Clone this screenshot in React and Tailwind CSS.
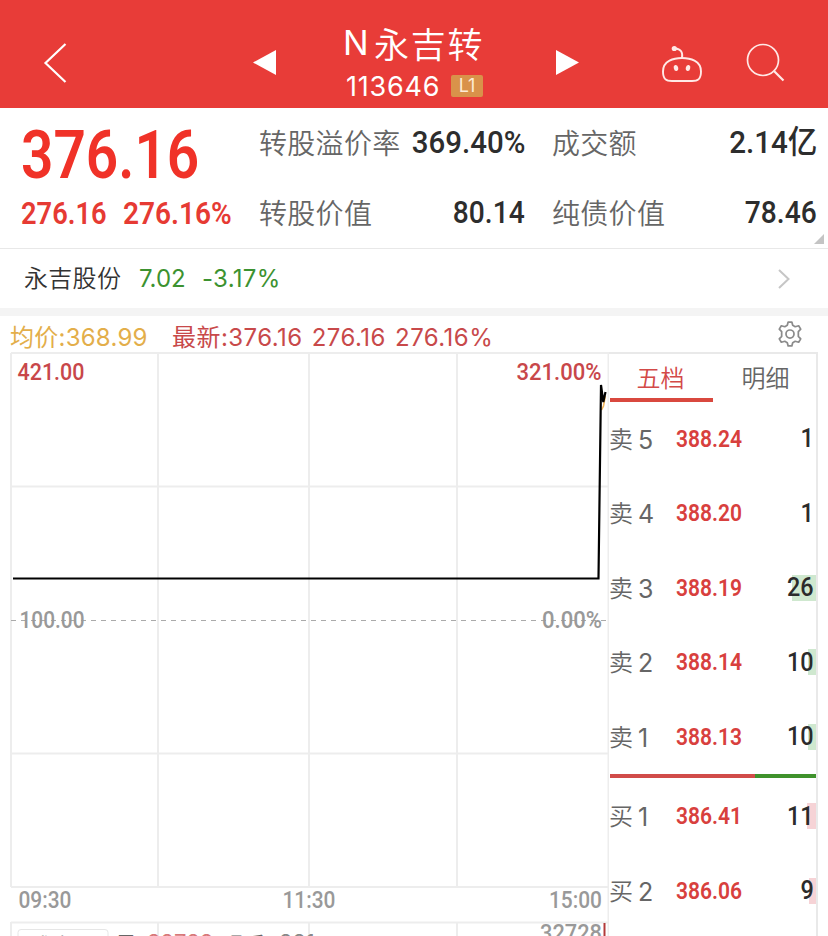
const CJK = "font-['Inter','Noto_Sans_CJK_SC',sans-serif]";

// Condensed figures: the inner span is squeezed horizontally from one side.
function Num({ children, className = "", right = false }) {
  return (
    <span
      className={`inline-block whitespace-nowrap font-['Roboto','Noto_Sans_CJK_SC',sans-serif] leading-none ${
        right ? "origin-right" : "origin-left"
      } ${className}`}
    >
      {children}
    </span>
  );
}

function Header() {
  return (
    <header className="flex h-[108px] items-start bg-[#e83c38] text-white">
      <svg className="mt-[43px] ml-[43px] h-10 w-6 shrink-0" viewBox="0 0 24 40" fill="none" stroke="#fff" strokeWidth="2.2">
        <path d="M22.5 1 2.5 20l20 19" />
      </svg>
      <svg className="mt-[50px] ml-[186px] h-[25px] w-[23px] shrink-0" viewBox="0 0 23 25" fill="#fff">
        <path d="M23 0v25L0 12.5z" />
      </svg>
      <div className="ml-[57px] flex w-[168px] flex-col items-start pl-[10px]">
        <div className="mt-[21px] flex h-[42px] items-center text-[34px] leading-none whitespace-nowrap">
          <span className="mt-px w-[31px]">N</span>
          <span className="font-['Noto_Sans_CJK_SC',sans-serif] text-[35px] font-[350] tracking-[1.7px]">永吉转</span>
        </div>
        <div className="mt-[9px] flex h-7 items-center pl-[3px]">
          <span className="w-[105px] text-[27px] leading-none tracking-[0.8px]">113646</span>
          <span className="flex h-[22px] w-8 items-center justify-center rounded-[2px] bg-[#d9924a] text-[18px] leading-none text-[#fdebd5]">L1</span>
        </div>
      </div>
      <svg className="mt-[50px] ml-[55px] h-[25px] w-[23px] shrink-0" viewBox="0 0 23 25" fill="#fff">
        <path d="M0 0v25l23-12.5z" />
      </svg>
      <svg className="mt-[44px] ml-[82px] h-10 w-[42px] shrink-0" viewBox="0 0 42 40" fill="none" stroke="#ffe9e6" strokeWidth="1.9">
        <path d="M21 14C13 14 2 16.500 2 27.500c0 7.500 3 9.500 9 9.500h20c6 0 9-2 9-9.500C40 16.500 29 14 21 14Z" />
        <path d="M21 14c1-6-1-9-7-9.500" />
        <circle cx="13.300" cy="4.500" r="2.600" fill="#ffe9e6" stroke="none" />
        <ellipse cx="15" cy="24" rx="2.200" ry="3" fill="#ffe9e6" stroke="none" transform="rotate(-12 15 24)" />
        <ellipse cx="27" cy="24" rx="2.200" ry="3" fill="#ffe9e6" stroke="none" transform="rotate(12 27 24)" />
      </svg>
      <svg className="mt-[43px] ml-[43px] h-10 w-10 shrink-0" viewBox="0 0 40 40" fill="none" stroke="#ffe9e6" strokeWidth="1.7">
        <circle cx="17" cy="17" r="15.500" />
        <path d="m28 28 9.500 9.500" strokeWidth="2.200" />
      </svg>
    </header>
  );
}

function Stat({ label, value, scale = "scale-x-[0.88]" }) {
  return (
    <div className="flex h-[70px] items-center justify-between">
      <span className="mt-[2px] text-[28px] leading-none font-[350] tracking-[0.3px] whitespace-nowrap text-[#666]">{label}</span>
      <Num right className={`-mt-[2px] -ml-10 text-[32px] font-medium text-[#2d2d2d] ${scale}`}>{value}</Num>
    </div>
  );
}

function Summary() {
  return (
    <section className="relative flex h-[141px] border-b border-[#e8e8e8]">
      <div className="w-[259px] shrink-0 pl-[21px] text-[#e63a33]">
        <div className="flex h-[81px] items-end">
          <Num className="scale-x-[0.86] text-[66px] font-semibold text-[#f03228]">376.16</Num>
        </div>
        <div className="mt-[9px] flex">
          <span className="w-[102px]"><Num className="scale-x-[0.88] text-[31px] font-semibold">276.16</Num></span>
          <Num className="scale-x-[0.905] text-[31px] font-semibold">276.16%</Num>
        </div>
      </div>
      <div className="w-[266px] shrink-0">
        <Stat label="转股溢价率" value="369.40%" scale="scale-x-[0.92]" />
        <Stat label="转股价值" value="80.14" />
      </div>
      <div className="ml-[27px] w-[265px] shrink-0">
        <Stat label="成交额" value="2.14亿" scale="scale-x-[0.925]" />
        <Stat label="纯债价值" value="78.46" />
      </div>
      <svg className="absolute right-[4px] bottom-[4px] h-[10px] w-[10px]" viewBox="0 0 10 10" fill="#c4c4c4">
        <path d="M10 0v10H0z" />
      </svg>
    </section>
  );
}

function StockRow() {
  return (
    <section className="flex h-[59px] items-center pl-6 text-[24px] leading-none whitespace-nowrap">
      <span className="w-[115px] font-[350] tracking-[0.3px] text-[#333]">永吉股份</span>
      <span className="w-[63px] text-[#3c9230]">7.02</span>
      <span className="tracking-[0.3px] text-[#3c9230]">-3.17%</span>
      <svg className="mr-[37px] ml-auto h-5 w-[14px]" viewBox="0 0 14 20" fill="none" stroke="#c6c6c6" strokeWidth="2">
        <path d="m2 1 9.500 9L2 19" />
      </svg>
    </section>
  );
}

function InfoRow() {
  return (
    <section className="flex h-9 items-center pl-[10px] text-[24px] leading-none font-[380] whitespace-nowrap">
      <span className="mt-2 w-[162px] tracking-[0.25px] text-[#e3ae4a]">均价:368.99</span>
      <span className="mt-2 tracking-[0.45px] text-[#c8494a] [word-spacing:2px]">最新:376.16 276.16 276.16%</span>
      <svg className="mr-[25px] ml-auto h-[26px] w-[26px]" viewBox="0 0 24 24" fill="none" stroke="#8b8b8b" strokeWidth="1.600" strokeLinejoin="round">
        <path d="M10.300 1h3.400l.8 3 2.300 1.300 3.200-.9 1.900 3.100-2.200 2.300v4.400l2.200 2.300-1.900 3.100-3.200-.9-2.300 1.300-.8 3h-3.400l-.8-3-2.300-1.300-3.200.9-1.900-3.100 2.200-2.300V9.800L2.100 7.500 4 4.400l3.200.9L9.500 4z" />
        <circle cx="12" cy="12" r="3.700" />
      </svg>
    </section>
  );
}

function ChartText({ x, y, w, children, fill = "#999", weight = 500, size = 23 }) {
  return (
    <text x={x} y={y} fill={fill} fontSize={size} fontWeight={weight} textLength={w} lengthAdjust="spacingAndGlyphs" className="font-['Roboto',sans-serif]">
      {children}
    </text>
  );
}

function Chart() {
  return (
    <svg className="block h-[584px] w-[609px] shrink-0" viewBox="0 352 609 584">
      <g fill="none" stroke="#ededed" strokeWidth="2">
        <path d="M11 353H609M11 486.500H609M11 753.500H609M11 887H609M11 922.500H609" />
        <path d="M11 353V887M158 353V887M309 353V887M457 353V887M608.500 353V936M11 922V936M158 922V936M309 922V936M457 922V936" />
      </g>
      <path d="M11 620.500H607" stroke="#aaa" strokeWidth="1.200" strokeDasharray="5 5" />
      <path d="m601.500 410 2-4 1.800-10" fill="none" stroke="#f0b45a" strokeWidth="1.600" />
      <path d="M13 578.500H598.500L601 385l2.300 17 2.200-10" fill="none" stroke="#000" strokeWidth="2.200" />
      <ChartText x={17.500} y={380} w={67} fill="#c8474a">421.00</ChartText>
      <ChartText x={516.500} y={380} w={85} fill="#c8474a">321.00%</ChartText>
      <ChartText x={19.500} y={628} w={65}>100.00</ChartText>
      <ChartText x={542} y={628} w={60}>0.00%</ChartText>
      <ChartText x={18.500} y={908} w={53}>09:30</ChartText>
      <ChartText x={282.500} y={908} w={53}>11:30</ChartText>
      <ChartText x={549} y={908} w={53}>15:00</ChartText>
      <ChartText x={540} y={941} w={62}>32728</ChartText>
      <path d="M604.500 923V936" stroke="#b23a3a" strokeWidth="2" />
      <rect x="18" y="929.500" width="90" height="30" rx="3" fill="#fff" stroke="#e6e6e6" />
      <g fontSize="22" className="font-['Inter','Noto_Sans_CJK_SC',sans-serif]">
        <text x="30" y="953.500" fill="#888">成交量</text>
        <text x="115" y="953" fill="#666">量:</text>
        <text x="147" y="950" fill="#d8787a">32728</text>
        <text x="222" y="953" fill="#666">现手:</text>
        <text x="279" y="950" fill="#888">221</text>
      </g>
    </svg>
  );
}

const SELLS = [
  ["卖", "5", "388.24", "1", ""],
  ["卖", "4", "388.20", "1", ""],
  ["卖", "3", "388.19", "26", "w-6 bg-[#cfe8cf]"],
  ["卖", "2", "388.14", "10", "w-2 bg-[#cfe8cf]"],
  ["卖", "1", "388.13", "10", "w-2 bg-[#cfe8cf]"],
];
const BUYS = [
  ["买", "1", "386.41", "11", "w-[9px] bg-[#f6d3d6]"],
  ["买", "2", "386.06", "9", "w-[7px] bg-[#f6d3d6]"],
];

function Row({ row }) {
  const [side, level, price, count, bar] = row;
  return (
    <div className="relative flex h-[74.5px] shrink-0 items-center text-[24px] leading-none text-[#666]">
      <span className="mt-[2px] -ml-px w-[29px] font-[350]">{side}</span>
      <span className="mt-[3px] w-[38px] text-[25px] font-[380]">{level}</span>
      <Num className="mt-px scale-x-[0.895] text-[23.5px] font-semibold text-[#d8403d]">{price}</Num>
      {bar && <span className={`absolute right-0 h-[26px] ${bar}`} />}
      <Num right className="relative -mt-px mr-[2px] ml-auto scale-x-[0.9] text-[26px] font-medium text-[#2b2b2b]">{count}</Num>
    </div>
  );
}

function OrderBook() {
  return (
    <aside className="flex h-[584px] w-[209px] flex-col overflow-hidden border-t-2 border-r-2 border-[#e9e9e9] pl-px">
      <div className="flex h-[47.500px] shrink-0 text-[24px] leading-none font-[350]">
        <div className="flex h-12 w-[103px] items-center justify-center border-b-4 border-[#d9483f] pt-[6px] pr-[2px] text-[#d34a48]">五档</div>
        <div className="flex h-12 w-[103px] items-center justify-center pt-[2px] pl-[2px] text-[#666]">明细</div>
      </div>
      {SELLS.map((row) => <Row key={row[0] + row[1]} row={row} />)}
      <div className="mb-px flex h-1 shrink-0">
        <div className="w-[145px] bg-[#d14c49]" />
        <div className="flex-1 bg-[#3f922c]" />
      </div>
      {BUYS.map((row) => <Row key={row[0] + row[1]} row={row} />)}
    </aside>
  );
}

export default function App() {
  return (
    <div className={`h-[936px] w-[828px] overflow-hidden bg-white ${CJK}`}>
      <Header />
      <Summary />
      <StockRow />
      <div className="h-2 bg-[#f4f4f4]" />
      <InfoRow />
      <main className="flex">
        <Chart />
        <OrderBook />
      </main>
    </div>
  );
}
